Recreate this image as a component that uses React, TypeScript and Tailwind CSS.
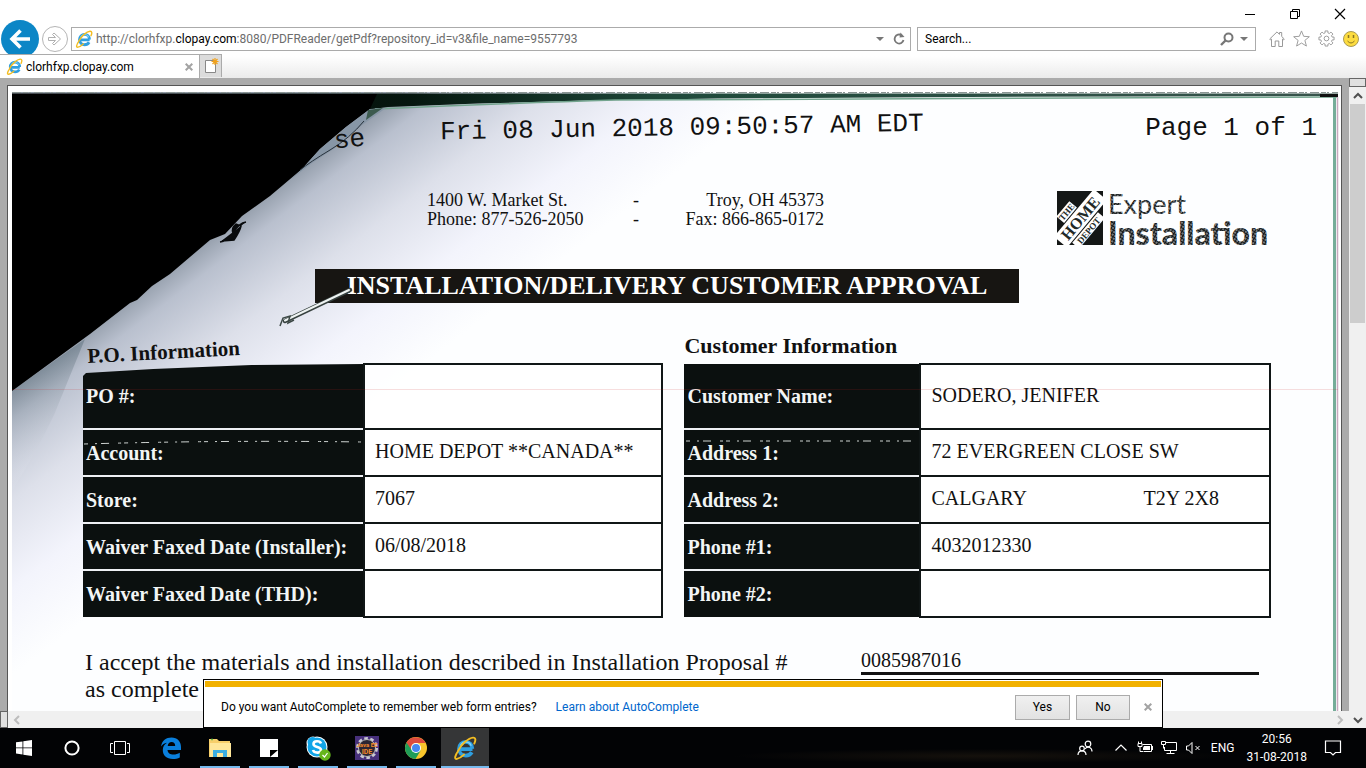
import React from "react";

function IeLogo({ className }: { className: string }) {
  return (
    <svg viewBox="0 0 24 24" className={className} aria-hidden="true">
      <path d="M19.5 13.2H7.4M19.3 12.8c0-4-2.9-7-6.6-7S6 8.900 6 12.800s2.900 6.800 6.800 6.800c2.700 0 4.800-1.200 6-3.300" fill="none" stroke="#2f9fe0" strokeWidth="3.800" />
      <path d="M7.500 9.500c1.200-2.400 3-3.500 5.200-3.500 2.500 0 4.500 1.300 5.500 3.700" fill="none" stroke="#7fd4f7" strokeWidth="1.400" />
      <path d="M5.500 14.500C1.500 20 1.200 23.500 4 22.900c2-.4 4.500-2 7-4.300M5 15C8.500 8 15.500 2 20 1.600c3-.2 2.800 2.900 1.300 6" fill="none" stroke="#f3bd22" strokeWidth="1.900" strokeLinecap="round" />
    </svg>
  );
}

function CloseMark() {
  return (
    <svg viewBox="0 0 8 8" className="size-2" aria-hidden="true">
      <path d="M.7.700l6.600 6.600M7.300.700L.7 7.300" stroke="#a3a3a3" strokeWidth="2" />
    </svg>
  );
}

function DownTriangle() {
  return (
    <svg viewBox="0 0 8 4" className="h-1 w-2" aria-hidden="true">
      <path d="M0 0h8L4 4z" fill="#777" />
    </svg>
  );
}

function BrowserHeader() {
  return (
    <header className="shrink-0 bg-white">
      <div className="flex h-[27px] justify-end pr-1">
        <button aria-label="Minimize" className="grid w-[45px] place-items-center">
          <svg viewBox="0 0 12 12" className="size-3"><path d="M1 6.500h10" stroke="#000" /></svg>
        </button>
        <button aria-label="Restore" className="grid w-[45px] place-items-center">
          <svg viewBox="0 0 12 12" className="size-3" fill="none" stroke="#000"><path d="M1.500 3.500h7v7h-7zM3.500 3.500v-2h7v7h-2" /></svg>
        </button>
        <button aria-label="Close" className="grid w-[45px] place-items-center">
          <svg viewBox="0 0 12 12" className="size-3"><path d="M1 1l10 10M11 1L1 11" stroke="#000" strokeWidth="1.200" /></svg>
        </button>
      </div>
      <nav className="flex h-[27px] items-start">
        <button aria-label="Back" className="-mt-[7px] ml-px grid size-[38px] shrink-0 place-items-center rounded-full bg-[#0c86c6]">
          <svg viewBox="0 0 24 24" className="size-6"><path d="M12.500 3.500L4 12l8.500 8.500M4.500 12H22" fill="none" stroke="#fff" strokeWidth="3.600" /></svg>
        </button>
        <button aria-label="Forward" className="-mt-px ml-[3px] grid size-[26px] shrink-0 place-items-center rounded-full border border-[#b5b5b5]">
          <svg viewBox="0 0 16 16" className="size-4"><path d="M1.500 6.500h7l-3-3 1.500-1.500L13.500 8 7 14l-1.500-1.500 3-3h-7z" fill="none" stroke="#b0b0b0" /></svg>
        </button>
        <div className="ml-[3px] flex h-6 min-w-0 flex-1 items-center border border-[#ababab] pl-[3px] pr-1">
          <IeLogo className="size-[18px] shrink-0" />
          <p className="ml-[3px] min-w-0 flex-1 truncate text-[12px] text-[#6d6d6d]">
            http://clorhfxp.<span className="text-black">clopay.com</span>:8080/PDFReader/getPdf?repository_id=v3&amp;file_name=9557793
          </p>
          <button aria-label="Address history" className="px-1"><DownTriangle /></button>
          <button aria-label="Refresh" className="ml-1">
            <svg viewBox="0 0 14 14" className="size-3.5"><path d="M11.500 8a4.500 4.500 0 1 1-2-4.800" fill="none" stroke="#777" strokeWidth="1.800" /><path d="M7.500 5.500L8.500.500l4 4.500z" fill="#777" /></svg>
          </button>
        </div>
        <div className="ml-1.5 flex h-6 w-[339px] items-center border border-[#ababab] px-[7px]">
          <input aria-label="Search" placeholder="Search..." className="min-w-0 flex-1 text-[12px] outline-none placeholder:text-black" />
          <button aria-label="Search the web">
            <svg viewBox="0 0 14 14" className="size-3.5" fill="none" stroke="#777"><circle cx="8.500" cy="5.500" r="4" strokeWidth="2" /><path d="M5.500 8.500L1 13" strokeWidth="2.400" /></svg>
          </button>
          <button aria-label="Search options" className="ml-1.5"><DownTriangle /></button>
        </div>
        <div className="flex w-[110px] items-center gap-2 pl-[13px] pt-[3px]">
          <button aria-label="Home">
            <svg viewBox="0 0 16 16" className="size-4" fill="none" stroke="#999"><path d="M.7 8L8 .9l2.500 2.500V1.500h2.200v4L15.300 8l-.8.900-1-.8v7.400H9.800V10H6.200v5.500H2.500V8.100l-1 .8z" /></svg>
          </button>
          <button aria-label="Favorites">
            <svg viewBox="0 0 18 18" className="size-[17px]" fill="none" stroke="#999"><path d="M9 1l2.300 5.700 6 .4-4.700 3.900 1.600 6L9 13.800 3.800 17l1.600-6L.7 7.100l6-.4z" /></svg>
          </button>
          <button aria-label="Tools">
            <svg viewBox="0 0 18 18" className="size-[17px]" fill="none" stroke="#999">
              <path d="M7.500 1h3v2l1.500.7L13.700 2.200l2.100 2.100L14.300 6l.7 1.500h2v3h-2l-.7 1.500 1.500 1.700-2.100 2.100-1.700-1.500-1.500.7v2h-3v-2L6 14.300l-1.700 1.500-2.100-2.100L3.700 12 3 10.500H1v-3h2L3.700 6 2.200 4.300l2.100-2.100L6 3.700 7.500 3z" />
              <circle cx="9" cy="9" r="2.500" />
            </svg>
          </button>
          <button aria-label="Feedback">
            <svg viewBox="0 0 16 16" className="size-4"><circle cx="8" cy="8" r="7.500" fill="#fddc3f" stroke="#a99a55" /><path d="M5.500 4v3M10.500 4v3" stroke="#8b7622" strokeWidth="1.500" /><path d="M4.500 10q3.500 4 7 0" fill="none" stroke="#8b7622" /></svg>
          </button>
        </div>
      </nav>
      <div className="relative z-10 flex h-6 bg-linear-to-b from-white from-10% to-[#ebebeb]">
        <div className="flex w-[200px] items-center border-r border-t border-[#ababab] bg-white pl-1.5 pr-1.5">
          <IeLogo className="size-[17px]" />
          <span className="ml-[3px] flex-1 text-[12px] text-black">clorhfxp.clopay.com</span>
          <button aria-label="Close tab"><CloseMark /></button>
        </div>
        <button aria-label="New tab" className="grid h-[23px] w-[22px] place-items-center border-r border-t border-[#ababab] bg-[#dcdcdc]">
          <svg viewBox="0 0 16 16" className="size-4"><path d="M2.500 2.500h10v12h-10z" fill="#fff" stroke="#888" /><path d="M12 0v7M8.500 3.500h7M9.500 1l5 5M14.500 1l-5 5" stroke="#f0a11c" strokeWidth="1.200" /></svg>
        </button>
      </div>
    </header>
  );
}

function ScanBackground() {
  return (
    <svg viewBox="8 86 1333 625" preserveAspectRatio="none" className="absolute inset-0 h-full w-full" aria-hidden="true">
      <defs>
        <linearGradient id="paper" gradientUnits="userSpaceOnUse" x1="190" y1="250" x2="330" y2="435">
          <stop offset="0" stopColor="#929ca9" />
          <stop offset=".12" stopColor="#b9c0ce" />
          <stop offset=".4" stopColor="#dde0ea" />
          <stop offset=".7" stopColor="#f3f4fc" />
          <stop offset="1" stopColor="#fdfeff" />
        </linearGradient>
        <linearGradient id="fold" gradientUnits="userSpaceOnUse" x1="35" y1="370" x2="75" y2="440">
          <stop offset="0" stopColor="#6f7f8c" stopOpacity=".7" />
          <stop offset="1" stopColor="#dde0ea" stopOpacity=".2" />
        </linearGradient>
        <linearGradient id="edge" x1="0" x2="1" y1="0" y2="0">
          <stop offset="0" stopColor="#000" />
          <stop offset=".3" stopColor="#06170f" />
          <stop offset=".5" stopColor="#1f4a3b" />
          <stop offset="1" stopColor="#38544c" />
        </linearGradient>
      </defs>
      <path d="M12 92h1326v619H12z" fill="url(#paper)" />
      <path d="M85 339L12 391v100q25-40 42-76z" fill="url(#fold)" />
      <path d="M12 92.500h1326" stroke="#8b9694" strokeDasharray="9 2 5 1 2 3" />
      <path d="M12 93.500h1326v2.500l-370 1-250 1.500-130 2-110 3-90 3.500-15 2H12z" fill="url(#edge)" />
      <path d="M375 109q140-6 240-9l723-3" fill="none" stroke="#73a48e" strokeWidth="1.500" />
      <path d="M1320 94h18v3h-18z" fill="#111" />
      <path d="M12 94h365l-7 15-24 18-26 22-18 20-32 27-28 20-17 18-15 6-40 34-18 12-15 14-7 3-40 31L12 391z" fill="#000" />
      <path d="M370 109l16-1-24 17-27 23-23 15-22 17 12-11 18-20 26-22z" fill="#8796a6" />
      <path d="M364 121q-14 17-34 29t-30 20" fill="none" stroke="#27313b" />
      <path d="M368 110l15-2-17 12z" fill="#3c5a4e" />
      <path d="M220 242q9-1 14-10t12-10M236 224q-5 4-3 9t-11 8l12-1q6-9 7-14z" fill="#090b0d" stroke="#090b0d" strokeWidth="1.500" />
      <path d="M1334.500 97v614" stroke="#76ad99" strokeWidth="3" />
      <path d="M1337.500 97v614" stroke="#c9a9bf" strokeWidth="1.500" />
    </svg>
  );
}

function ScanMarks() {
  return (
    <svg viewBox="8 86 1333 625" preserveAspectRatio="none" className="pointer-events-none absolute inset-0 h-full w-full" aria-hidden="true">
      <path d="M84 444q140-4 278-2M686 441h232" fill="none" stroke="#cfd4d2" strokeDasharray="4 7 2 4 8 9 3 3" />
      <path d="M12 389.500h1326" stroke="#c22" strokeOpacity=".15" />
      <path d="M285 321L350 290" stroke="#37413f" strokeWidth="4.500" strokeLinecap="round" />
      <path d="M285 320.500L349 290" stroke="#eef3f2" strokeWidth="2" strokeLinecap="round" />
      <path d="M280 326l3-8 7-2-2 7 6-3" fill="none" stroke="#3d4946" strokeWidth="1.500" />
    </svg>
  );
}

function ExpertLogo() {
  return (
    <svg viewBox="0 0 216 58" className="h-[58px] w-[216px] shrink-0">
      <defs>
        <pattern id="halftone" width="3" height="3" patternUnits="userSpaceOnUse" patternTransform="rotate(30)">
          <path d="M0 0h3v3H0z" fill="#15191a" />
          <circle cx="1" cy="1" r=".8" fill="#f4f8f8" />
        </pattern>
        <clipPath id="logo-square"><path d="M0 0h46v54H0z" /></clipPath>
      </defs>
      <g clipPath="url(#logo-square)">
        <path d="M0 0h46v54H0z" fill="#141716" />
        <path d="M-14-19h20v10h-20zM-31-8h62v17h-62zM-24 10h40v9h-40z" transform="translate(23 27) rotate(-50)" fill="#fff" />
      </g>
      <g transform="translate(23 27) rotate(-50)" fill="#222a28" textAnchor="middle" fontFamily="Liberation Serif, serif" fontWeight="700">
        <text x="-4" y="-11" fontSize="9">THE</text>
        <text x="0" y="6" fontSize="16">HOME</text>
        <text x="-4" y="18" fontSize="9">DEPOT</text>
      </g>
      <text x="51" y="23" fontFamily="Lato, sans-serif" fontSize="27" fill="url(#halftone)">Expert</text>
      <text x="51" y="54" fontFamily="Lato, sans-serif" fontWeight="900" fontSize="32" fill="url(#halftone)">Installation</text>
    </svg>
  );
}

type Row = { label: string; value: string; extra?: string };

const poRows: Row[] = [
  { label: "PO #:", value: "" },
  { label: "Account:", value: "HOME DEPOT **CANADA**" },
  { label: "Store:", value: "7067" },
  { label: "Waiver Faxed Date (Installer):", value: "06/08/2018" },
  { label: "Waiver Faxed Date (THD):", value: "" },
];

const customerRows: Row[] = [
  { label: "Customer Name:", value: "SODERO, JENIFER" },
  { label: "Address 1:", value: "72 EVERGREEN CLOSE SW" },
  { label: "Address 2:", value: "CALGARY", extra: "T2Y 2X8" },
  { label: "Phone #1:", value: "4032012330" },
  { label: "Phone #2:", value: "" },
];

function InfoTable({ rows, labelWidth, curled, name }: { rows: Row[]; labelWidth: string; curled?: boolean; name: string }) {
  return (
    <table aria-label={name} className="w-full table-fixed border-collapse text-left text-[20px] leading-6">
      <tbody>
        {rows.map((row, i) => (
          <tr key={row.label} className={i === 0 ? "h-[65px]" : "h-[47px]"}>
            <th
              scope="row"
              className={`${labelWidth} bg-[#0b100f] pl-[3px] font-bold text-[#f2f5f5] ${i > 0 ? "border-t-2 border-t-[#eef0f4]" : ""} ${
                i === 0 && curled ? "[clip-path:polygon(0_12px,3px_9px,25%_5px,60%_1px,100%_0,100%_100%,0_100%)]" : ""
              }`}
            >
              {row.label}
            </th>
            <td className="border-2 border-[#101616] bg-white/80 pb-1 pl-2.5 text-[#111]">
              <div className="flex">
                <span>{row.value}</span>
                {row.extra && <span className="ml-auto mr-[50px]">{row.extra}</span>}
              </div>
            </td>
          </tr>
        ))}
      </tbody>
    </table>
  );
}

function ScannedPage() {
  return (
    <article className="relative min-w-0 flex-1 overflow-hidden border-l border-r border-t border-[#555] bg-white font-['Liberation_Serif',serif] text-[#111]">
      <ScanBackground />
      <div className="relative">
        <div className="flex items-end justify-between pl-[326px] pr-6 pt-[26px] font-['Liberation_Mono',monospace] text-[26px] leading-8">
          <div className="flex items-end gap-[75px]">
            <span className="-rotate-6 translate-y-3">se</span>
            <p className="-rotate-1">Fri 08 Jun 2018 09:50:57 AM EDT</p>
          </div>
          <p>Page 1 of 1</p>
        </div>
        <div className="mt-[47px] flex items-start justify-between pl-[419px] pr-[68px] text-[18px] leading-[19px]">
          <div className="grid w-[397px] grid-cols-[206px_1fr_auto]">
            <span>1400 W. Market St.</span><span>-</span><span className="text-right">Troy, OH 45373</span>
            <span>Phone: 877-526-2050</span><span>-</span><span className="text-right">Fax: 866-865-0172</span>
          </div>
          <ExpertLogo />
        </div>
        <h1 className="ml-[307px] mr-[322px] mt-5 bg-[#171512] text-center text-[26px] font-bold leading-[34px] text-white">
          INSTALLATION/DELIVERY CUSTOMER APPROVAL
        </h1>
        <div className="mt-[30px] grid grid-cols-[580fr_586fr] gap-[21px] pl-[75px] pr-[70px]">
          <section>
            <h2 className="ml-1 w-fit -rotate-3 pt-2 text-[21px] font-bold leading-[22px]">P.O. Information</h2>
            <InfoTable name="P.O. Information" rows={poRows} labelWidth="w-[281px]" curled />
          </section>
          <section>
            <h2 className="mb-1 text-[22px] font-bold leading-[26px]">Customer Information</h2>
            <InfoTable name="Customer Information" rows={customerRows} labelWidth="w-[236px]" />
          </section>
        </div>
        <div className="mt-[31px] flex items-start pl-[77px] pr-[82px] text-[24px] leading-[27px]">
          <p className="w-[776px]">
            I accept the materials and installation described in Installation Proposal #<br />as complete
          </p>
          <p className="flex-1 border-b-[3px] border-[#111] pb-px text-[20px] leading-[22px]">0085987016</p>
        </div>
      </div>
      <ScanMarks />
    </article>
  );
}

function Chevron({ path, color }: { path: string; color: string }) {
  return <svg viewBox="0 0 10 10" className="size-2.5" aria-hidden="true"><path d={path} fill="none" stroke={color} strokeWidth="2" /></svg>;
}

function AutoCompleteBar() {
  return (
    <div role="alert" className="absolute bottom-0 left-[203px] right-[203px] z-20 border border-black bg-white px-px pt-px text-[12px] text-black">
      <div className="h-1.5 bg-[#f2b100]" />
      <div className="flex h-10 items-center pl-4 pr-[9px]">
        <span>Do you want AutoComplete to remember web form entries?</span>
        <a href="#autocomplete" className="ml-[19px] text-[#0066cc]">Learn about AutoComplete</a>
        <button className="ml-auto h-[25px] w-[55px] border border-[#ababab] bg-linear-to-b from-[#f0f0f0] to-[#e2e2e2]">Yes</button>
        <button className="ml-1.5 h-[25px] w-[54px] border border-[#ababab] bg-linear-to-b from-[#f0f0f0] to-[#e2e2e2]">No</button>
        <button aria-label="Dismiss" className="ml-3.5"><CloseMark /></button>
      </div>
    </div>
  );
}

function Viewer() {
  return (
    <main className="relative flex min-h-0 flex-1 bg-[#ababab]">
      <div className="flex min-w-0 flex-1 flex-col">
        <div className="flex min-h-0 flex-1 pl-[7px] pr-[7px] pt-[7px]"><ScannedPage /></div>
        <div className="flex h-[17px] shrink-0 bg-[#f0f0f0]">
          <div className="w-2 border border-[#666] bg-[#e0e0e0]" />
          <div className="flex flex-1 items-center justify-between px-1">
            <Chevron path="M7 1L3 5l4 4" color="#bdbdbd" />
            <Chevron path="M3 1l4 4-4 4" color="#bdbdbd" />
          </div>
        </div>
      </div>
      <div className="flex w-[17px] shrink-0 flex-col bg-[#f0f0f0]">
        <div className="h-[9px] border border-[#666] bg-[#e0e0e0]" />
        <div className="grid h-[17px] place-items-center"><Chevron path="M1 7l4-4 4 4" color="#505050" /></div>
        <div className="flex-1"><div className="mx-px h-[36%] bg-[#cdcdcd]" /></div>
        <div className="grid h-[17px] place-items-center"><Chevron path="M1 3l4 4 4-4" color="#505050" /></div>
      </div>
      <AutoCompleteBar />
    </main>
  );
}

const taskItems = [
  {
    name: "Microsoft Edge", state: "idle",
    icon: <svg viewBox="0 0 24 24" className="size-6"><path d="M2 10.500C3 4.500 7 1.500 12.500 1.500c6 0 9.500 4.200 9.500 9.500V14H8.500c.2 3 2.700 4.600 6 4.600 2.300 0 4.400-.6 6.300-1.800v4.700c-2 1.100-4.400 1.500-7 1.500C7.500 23 3.800 19.400 3.800 14c0-3 1.500-5.600 4.200-7.200-2.700.4-4.700 1.800-6 3.700zM8.700 10h7.500c0-2.600-1.400-4-3.600-4-2.100 0-3.500 1.600-3.900 4z" fill="#0a7fdc" /></svg>,
  },
  {
    name: "File Explorer", state: "open",
    icon: <svg viewBox="0 0 24 24" className="size-6"><path d="M1 3h8l2 2h11v16H1z" fill="#f7cf6b" /><path d="M2 7h21v14H2z" fill="#ffe79a" /><path d="M3 3.500h2" stroke="#6cc04a" strokeWidth="1.500" /><path d="M5 21v-7h14v7h-4v-4H9v4z" fill="#3caee2" /></svg>,
  },
  {
    name: "Sticky Notes", state: "open",
    icon: <svg viewBox="0 0 24 24" className="size-6"><path d="M3 3h18v18H3z" fill="#fff" /><path d="M13 21v-7h8z" fill="#000" /></svg>,
  },
  {
    name: "Skype", state: "open",
    icon: <svg viewBox="0 0 26 26" className="size-[26px]"><circle cx="8" cy="8" r="6.500" fill="#fff" /><circle cx="16" cy="16" r="6.500" fill="#fff" /><circle cx="12" cy="12" r="10.500" fill="#fff" /><circle cx="12" cy="12" r="9.500" fill="#12a5e8" /><circle cx="7.500" cy="7" r="5" fill="#12a5e8" /><path d="M16 8.500C15 5.500 8.500 5.500 8.500 9c0 4 7.500 2 7.500 6 0 3.500-7 3.500-8 0" fill="none" stroke="#fff" strokeWidth="2.600" /><circle cx="20" cy="20" r="5.700" fill="#65b51b" /><path d="M17.500 20l2 2 3-4" fill="none" stroke="#fff" strokeWidth="1.200" /></svg>,
  },
  {
    name: "Java EE IDE", state: "open",
    icon: <svg viewBox="0 0 24 24" className="size-6"><path d="M0 0h24v24H0z" fill="#47307b" /><circle cx="12" cy="12" r="9.500" fill="none" stroke="#c9c9d2" strokeWidth="3" strokeDasharray="3.500 2.470" /><circle cx="12" cy="12" r="8.500" fill="#2b2633" stroke="#bbb" /><g fill="#f58a2a" fontFamily="Roboto, sans-serif" fontWeight="700" textAnchor="middle"><text x="12" y="11" fontSize="6">Java EE</text><text x="12" y="18" fontSize="7">IDE</text></g></svg>,
  },
  {
    name: "Google Chrome", state: "open",
    icon: <svg viewBox="0 0 24 24" className="size-6"><circle cx="12" cy="12" r="11" fill="#f9c52b" /><path d="M2.500 6.500A11 11 0 0 0 11.500 23l5-8.300L12 12z" fill="#1f9d58" /><path d="M2.500 6.500A11 11 0 0 1 21.600 7H12a5 5 0 0 0-4.500 7z" fill="#dd4b3e" /><circle cx="12" cy="12" r="5" fill="#fff" /><circle cx="12" cy="12" r="4" fill="#4688f1" /></svg>,
  },
  { name: "Internet Explorer", state: "active", icon: <IeLogo className="size-6" /> },
];

function Taskbar() {
  return (
    <footer className="flex h-10 shrink-0 bg-[#020305] bg-[radial-gradient(ellipse_at_72%_70%,#15110c,#020305_18%)] text-[12px] text-white">
      <div className="flex">
        <button aria-label="Start" className="grid w-12 place-items-center">
          <svg viewBox="0 0 16 16" className="size-4" fill="#fff"><path d="M0 2.300l6.500-.9v6.100H0zM7.300 1.300L16 0v7.500H7.300zM0 8.300h6.500v6.200L0 13.600zM7.300 8.300H16V16l-8.700-1.300z" /></svg>
        </button>
        <button aria-label="Cortana" className="grid w-12 place-items-center">
          <svg viewBox="0 0 16 16" className="size-4"><circle cx="8" cy="8" r="6.600" fill="none" stroke="#fff" strokeWidth="2" /></svg>
        </button>
        <button aria-label="Task view" className="mr-[3px] grid w-12 place-items-center">
          <svg viewBox="0 0 20 14" className="h-3.5 w-5" fill="none" stroke="#fff"><path d="M4.500.500h11v13h-11zM3 2.500H.5v9H3M17 2.500h2.500v9H17" /></svg>
        </button>
      </div>
      <div className="flex gap-px">
        {taskItems.map((item) => (
          <button key={item.name} aria-label={item.name} className={`flex w-12 flex-col items-center ${item.state === "active" ? "bg-[#353637]" : ""}`}>
            <span className="grid h-[38px] place-items-center pt-0.5">{item.icon}</span>
            <span className={`h-0.5 ${item.state === "idle" ? "w-0" : item.state === "active" ? "w-12 bg-[#76b9ed]" : "w-10 bg-[#76b9ed]"}`} />
          </button>
        ))}
      </div>
      <div className="ml-auto flex items-center">
        <button aria-label="People">
          <svg viewBox="0 0 16 16" className="size-4" fill="none" stroke="#fff" strokeWidth="1.200"><circle cx="11" cy="4" r="2.800" /><circle cx="5" cy="8.500" r="2.300" /><path d="M1 15c0-5.500 8-5.500 8 0M8 8.800c3-3 7-1.500 7 2.700" /></svg>
        </button>
        <button aria-label="Show hidden icons" className="ml-[22px]">
          <svg viewBox="0 0 12 12" className="size-3" fill="none" stroke="#fff" strokeWidth="1.200"><path d="M.5 8.500L6 3l5.500 5.500" /></svg>
        </button>
        <button aria-label="Battery" className="ml-2.5">
          <svg viewBox="0 0 16 14" className="h-3.5 w-4" fill="none" stroke="#fff"><path d="M5.500 3.500h9v7h-8M15.500 5v4M1 2.500h4v3H1zM1.500.500v2M4.500.500v2M3 5.500v5h3" /><path d="M7 5h6v4H6V7z" fill="#fff" stroke="none" /></svg>
        </button>
        <button aria-label="Network" className="ml-2">
          <svg viewBox="0 0 16 14" className="h-3.5 w-4" fill="none" stroke="#fff"><path d="M5 1.500h10.500v8h-12V6M9.500 9.500v3M5.500 12.500h8M.5.500h4v3h-4zM2.500 3.500v4" /></svg>
        </button>
        <button aria-label="Volume muted" className="ml-2">
          <svg viewBox="0 0 16 14" className="h-3.5 w-4" fill="none" stroke="#fff"><path d="M1.500 5h2L7 1.500v11L3.500 9h-2zM10.500 5l4 4M14.500 5l-4 4" /></svg>
        </button>
        <span className="ml-2.5">ENG</span>
        <time className="ml-3 text-center leading-[18px]">20:56<br />31-08-2018</time>
        <button aria-label="Action center" className="ml-[17px] mr-[24px]">
          <svg viewBox="0 0 18 18" className="size-[18px]" fill="none" stroke="#fff" strokeWidth="1.200"><path d="M1.500 2h15v11.500h-5L9 16l-2.500-2.500h-5z" /></svg>
        </button>
      </div>
    </footer>
  );
}

export default function App() {
  return (
    <div className="flex h-screen flex-col overflow-hidden bg-white font-[Roboto,'Noto_Sans',sans-serif]">
      <BrowserHeader />
      <Viewer />
      <Taskbar />
    </div>
  );
}
